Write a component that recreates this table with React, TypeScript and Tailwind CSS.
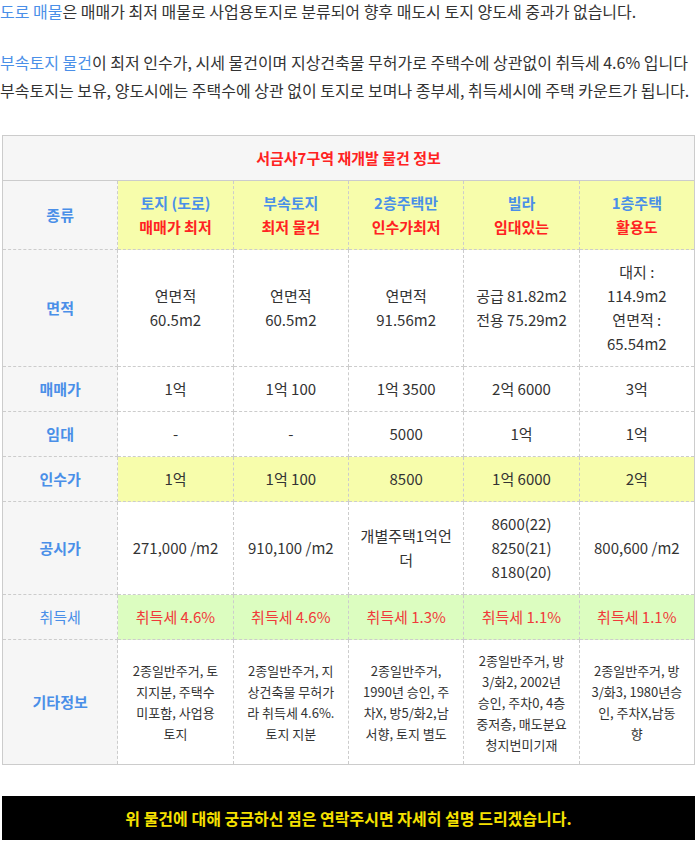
const font = "font-['Noto_Sans_CJK_KR','Noto_Sans',sans-serif]";

const types = [
  ['토지 (도로)', '매매가 최저'],
  ['부속토지', '최저 물건'],
  ['2층주택만', '인수가최저'],
  ['빌라', '임대있는'],
  ['1층주택', '활용도'],
];

const rows: { label: string; h: string; bg?: string; values: string[][] }[] = [
  {
    label: '면적',
    h: 'h-[117px]',
    values: [['연면적', '60.5m2'], ['연면적', '60.5m2'], ['연면적', '91.56m2'], ['공급 81.82m2', '전용 75.29m2'], ['대지 :', '114.9m2', '연면적 :', '65.54m2']],
  },
  { label: '매매가', h: 'h-[45px]', values: [['1억'], ['1억 100'], ['1억 3500'], ['2억 6000'], ['3억']] },
  { label: '임대', h: 'h-[45px]', values: [['-'], ['-'], ['5000'], ['1억'], ['1억']] },
  { label: '인수가', h: 'h-[45px]', bg: 'bg-[#f7fdab]', values: [['1억'], ['1억 100'], ['8500'], ['1억 6000'], ['2억']] },
  {
    label: '공시가',
    h: 'h-[93px]',
    values: [['271,000 /m2'], ['910,100 /m2'], ['개별주택1억언', '더'], ['8600(22)', '8250(21)', '8180(20)'], ['800,600 /m2']],
  },
];

// 기타정보 lines, wrapped as in the listing
const etc = [
  ['2종일반주거, 토', '지지분, 주택수', '미포함, 사업용', '토지'],
  ['2종일반주거, 지', '상건축물 무허가', '라 취득세 4.6%.', '토지 지분'],
  ['2종일반주거,', '1990년 승인, 주', '차X, 방5/화2,남', '서향, 토지 별도'],
  ['2종일반주거, 방', '3/화2, 2002년', '승인, 주차0, 4층', '중저층, 매도분요', '청지번미기재'],
  ['2종일반주거, 방', '3/화3, 1980년승', '인, 주차X,남동', '향'],
];

const taxes = ['취득세 4.6%', '취득세 4.6%', '취득세 1.3%', '취득세 1.1%', '취득세 1.1%'];

const cell = 'border border-dashed border-[#cccccc] text-center align-middle';
const head = `${cell} bg-[#f6f6f6] text-[#4a8fe8] font-bold`;

export default function App() {
  return (
    <div className={`${font} bg-white text-[#333333] text-[15px] pb-[5px]`}>
      <p className="text-[16px] leading-[22px]">
        <span className="text-[#4a8fe8]">도로 매물</span>은 매매가 최저 매물로 사업용토지로 분류되어 향후 매도시 토지 양도세 중과가 없습니다.
      </p>
      <p className="text-[16px] leading-[28px] mt-[26px] whitespace-nowrap">
        <span className="text-[#4a8fe8]">부속토지 물건</span>이 최저 인수가, 시세 물건이며 지상건축물 무허가로 주택수에 상관없이 취득세 4.6% 입니다
        <br />
        부속토지는 보유, 양도시에는 주택수에 상관 없이 토지로 보며나 종부세, 취득세시에 주택 카운트가 됩니다.
      </p>

      <table className="mt-[31px] ml-[2px] w-[693px] table-fixed border-collapse border border-solid border-[#cccccc]">
        <tbody>
          <tr className="h-[45px]">
            <td colSpan={6} className="border border-solid border-[#cccccc] bg-[#f6f6f6] text-center font-bold text-[#ff2222]">
              서금사7구역 재개발 물건 정보
            </td>
          </tr>
          <tr className="h-[69px]">
            <td className={head}>종류</td>
            {types.map(([a, b]) => (
              <td key={a} className={`${cell} bg-[#f7fdab] font-bold leading-[24px]`}>
                <div className="text-[#4a8fe8]">{a}</div>
                <div className="text-[#ff2222]">{b}</div>
              </td>
            ))}
          </tr>
          {rows.map((r) => (
            <tr key={r.label} className={r.h}>
              <td className={head}>{r.label}</td>
              {r.values.map((v, i) => (
                <td key={i} className={`${cell} leading-[24px] px-2 ${r.bg ?? 'bg-white'}`}>
                  {v.map((line, j) => (
                    <div key={j}>{line}</div>
                  ))}
                </td>
              ))}
            </tr>
          ))}
          <tr className="h-[45px]">
            <td className={`${cell} bg-[#f6f6f6] text-[#4a8fe8]`}>취득세</td>
            {taxes.map((t, i) => (
              <td key={i} className={`${cell} bg-[#dcfdc0] text-[#f03a3a]`}>
                {t}
              </td>
            ))}
          </tr>
          <tr className="h-[125px]">
            <td className={head}>기타정보</td>
            {etc.map((lines, i) => (
              <td key={i} className={`${cell} text-[13px] leading-[21px] whitespace-nowrap`}>
                {lines.map((line, j) => (
                  <div key={j}>{line}</div>
                ))}
              </td>
            ))}
          </tr>
        </tbody>
      </table>

      <div className="mt-[31px] ml-[2px] w-[693px] h-[44px] bg-black flex items-center justify-center text-[16px] text-[#f5e100] font-bold">
        위 물건에 대해 궁금하신 점은 연락주시면 자세히 설명 드리겠습니다.
      </div>
    </div>
  );
}
